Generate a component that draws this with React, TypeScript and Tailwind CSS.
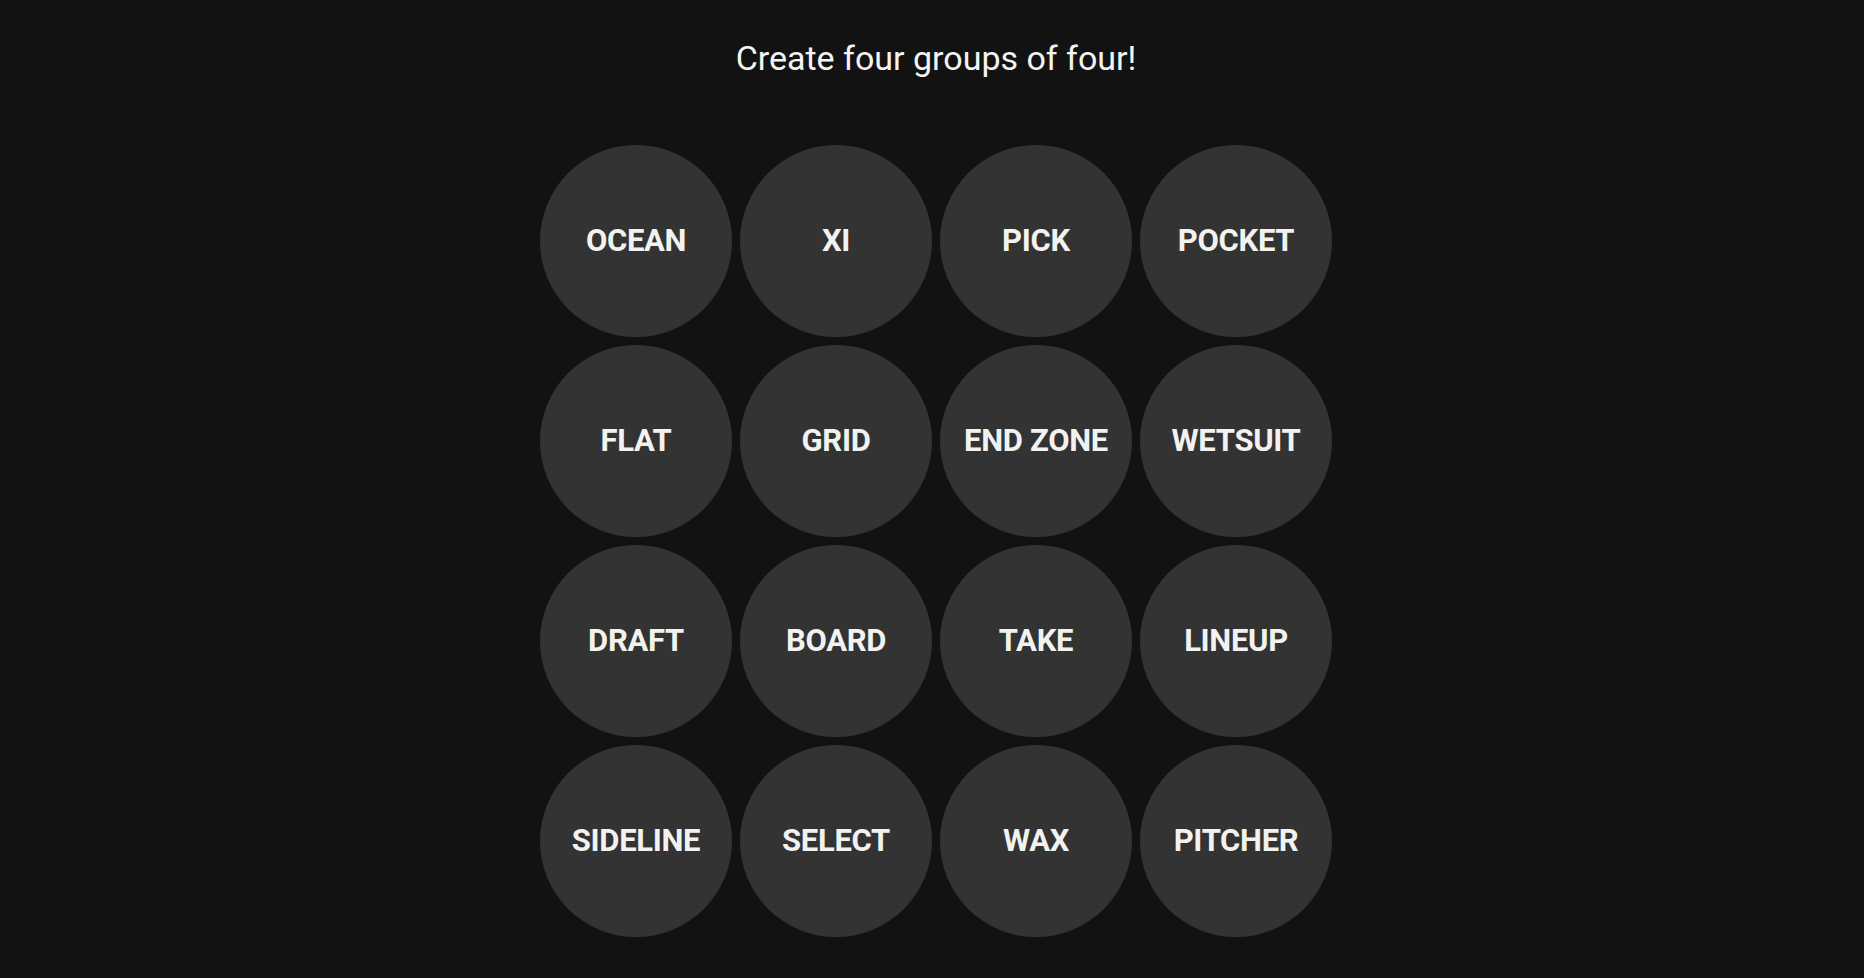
import React from "react";

const words: string[] = [
    "OCEAN", "XI", "PICK", "POCKET",
    "FLAT", "GRID", "END ZONE", "WETSUIT",
    "DRAFT", "BOARD", "TAKE", "LINEUP",
    "SIDELINE", "SELECT", "WAX", "PITCHER",
];

const Tile: React.FC<{ word: string }> = ({ word }) => {
    return (
        <button className="w-[192px] h-[192px] rounded-full bg-[#333333] flex items-center justify-center">
            <span className="text-[31px] font-bold text-[#f2f2f0] uppercase tracking-[-0.01em]">{word}</span>
        </button>
    );
};

const App: React.FC = () => {
    return (
        <div
            className="min-h-screen w-full bg-[#121212] flex flex-col items-center pl-2 pt-[38px]"
            style={{ fontFamily: 'Roboto, "Liberation Sans", sans-serif' }}
        >
            <h1 className="text-[34px] leading-[40px] font-normal text-[#f4f4f4]">Create four groups of four!</h1>
            <div className="grid grid-cols-4 gap-2 mt-[67px]">
                {words.map((w) => (
                    <Tile key={w} word={w} />
                ))}
            </div>
        </div>
    );
};

export default App;
